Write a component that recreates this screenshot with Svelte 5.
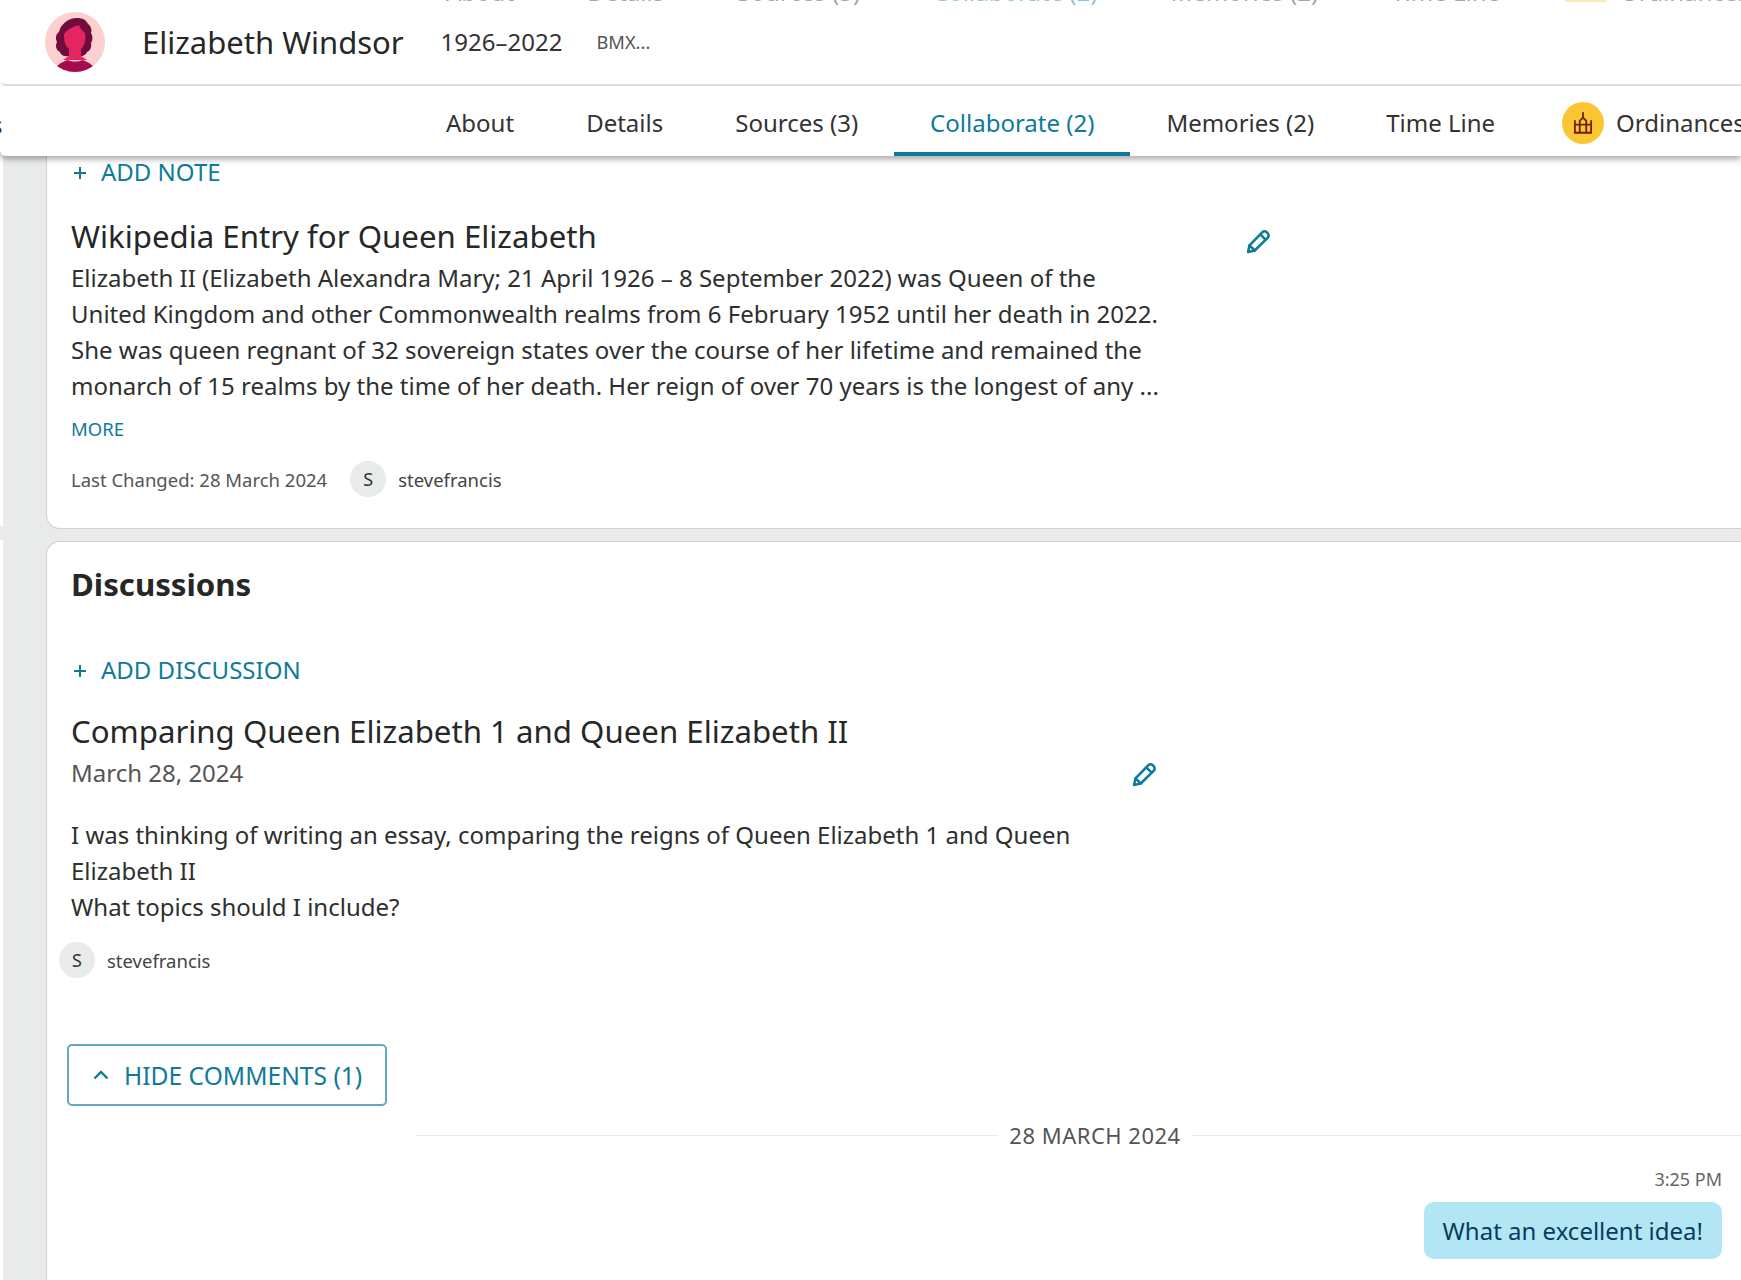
<script lang="ts">
  const tabs = [
    { label: 'About' },
    { label: 'Details' },
    { label: 'Sources (3)' },
    { label: 'Collaborate (2)', active: true },
    { label: 'Memories (2)' },
    { label: 'Time Line' }
  ];
</script>

{#snippet pencil()}
  <svg class="pencil" viewBox="0 0 24 24" fill="none" stroke="currentColor" stroke-width="2.2" stroke-linejoin="round" stroke-linecap="round">
    <path d="M3.500 20.500l1.200-5.600L15.800 3.600c1-1 2.600-1 3.600 0l1 1c1 1 1 2.600 0 3.600L9.200 19.300z" />
    <path d="M4.700 14.900l4.500 4.400M14 5.500l4.500 4.500" />
  </svg>
{/snippet}

{#snippet plus()}
  <svg class="plus" viewBox="0 0 14 14" fill="none" stroke="currentColor" stroke-width="2">
    <path d="M7 1v12M1 7h12" />
  </svg>
{/snippet}

{#snippet userChip()}
  <span class="chip">S</span>
  <span class="user">stevefrancis</span>
{/snippet}

<div class="page">
  <header class="person">
    <!-- bottoms of the row scrolled out above the header -->
    <div class="ghost-row">
      {#each tabs as t}<span class:teal={t.active}>{t.label}</span>{/each}
      <b></b>
      <span class="last-ghost">Ordinances</span>
    </div>
    <svg class="avatar" viewBox="0 0 60 60">
      <circle cx="30" cy="30" r="30" fill="#fdd0d0" />
      <clipPath id="av"><circle cx="30" cy="30" r="30" /></clipPath>
      <g clip-path="url(#av)">
        <path d="M32 6c6 0 9 2 11 6 3 2 4 6 3 9 2 3 2 7 0 10 1 4-1 8-4 9-1 3-5 5-8 4H24c-3 1-8 0-9-4-4-2-5-6-3-10-2-4-1-8 2-10 1-6 8-14 18-14z" fill="#700d3c" />
        <path d="M28 15l6-2c1 4 4 6 6 8 1 7 0 12-4 16v7l6 4H18l6-4v-7c-4-3-5-8-5-14 1-4 6-6 9-8z" fill="#e3265f" />
        <path d="M10 60c0-6 6-10 13-12 3 2 11 2 14 0 7 2 13 6 13 12z" fill="#a80b4d" />
      </g>
    </svg>
    <h1>Elizabeth Windsor</h1>
    <span class="years">1926–2022</span>
    <span class="pid">BMX...</span>
  </header>

  <nav class="tabs">
    <span class="clipped">s</span>
    {#each tabs as t}
      <span class="tab" class:active={t.active}>{t.label}</span>
    {/each}
    <span class="tab ord">
      <span class="temple">
        <svg viewBox="0 0 24 24" fill="none" stroke="#6b2408" stroke-width="1.700">
          <path d="M12 2v5M9 21v-11l3-3 3 3v11M4.500 13.500h15V21h-15zM4.500 13.500V9.500M19.500 13.500V9.500" />
        </svg>
      </span>
      Ordinances
    </span>
  </nav>

  <main class="content">
    <section class="card notes">
      <div class="add">{@render plus()}ADD NOTE</div>

      <div class="entry-head">
        <h2>Wikipedia Entry for Queen Elizabeth</h2>
        {@render pencil()}
      </div>
      <p class="body clamp">
        Elizabeth II (Elizabeth Alexandra Mary; 21 April 1926 – 8 September 2022) was Queen of the
        United Kingdom and other Commonwealth realms from 6 February 1952 until her death in 2022.
        She was queen regnant of 32 sovereign states over the course of her lifetime and remained the
        monarch of 15 realms by the time of her death. Her reign of over 70 years is the longest of any ...
      </p>
      <div class="more">MORE</div>
      <div class="changed">
        <span class="last">Last Changed: 28 March 2024</span>
        {@render userChip()}
      </div>
    </section>

    <section class="card discussions">
      <h3>Discussions</h3>
      <div class="add second">{@render plus()}ADD DISCUSSION</div>

      <div class="topic">
        <h2>Comparing Queen Elizabeth 1 and Queen Elizabeth II</h2>
        <div class="date-row">
          <span class="date">March 28, 2024</span>
          {@render pencil()}
        </div>
        <p class="body">
          I was thinking of writing an essay, comparing the reigns of Queen Elizabeth 1 and Queen
          Elizabeth II<br />What topics should I include?
        </p>
      </div>
      <div class="author">{@render userChip()}</div>

      <button class="toggle">
        <svg viewBox="0 0 16 10" fill="none" stroke="currentColor" stroke-width="2.400"><path d="M1.500 8.500L8 2l6.500 6.500" /></svg>
        HIDE COMMENTS (1)
      </button>

      <div class="chat">
        <div class="day"><i></i><span>28 MARCH 2024</span><i></i></div>
        <div class="time">3:25 PM</div>
        <div class="bubble">What an excellent idea!</div>
      </div>
    </section>
  </main>
</div>

<style>
  :global(body) { margin: 0; background: #fff; }

  .page {
    width: 1741px;
    height: 1280px;
    overflow: hidden;
    position: relative;
    font-family: "Noto Sans", "Open Sans", sans-serif;
    color: #262727;
    background: #fff;
  }

  .person {
    height: 84px;
    display: flex;
    align-items: center;
    padding-left: 45px;
    border-bottom: 2px solid #e4e5e5;
    border-radius: 0 0 0 6px;
    background: #fff;
    position: relative;
  }
  .ghost-row {
    position: absolute;
    top: -23px;
    left: 446px;
    display: flex;
    gap: 73px;
    font-size: 24px;
    line-height: 30px;
    color: #a5a8a8;
    white-space: nowrap;
  }
  .ghost-row .teal { color: #8cc6d8; }
  .ghost-row b { width: 42px; height: 25px; background: #fde8b8; margin-left: -8px; }
  .ghost-row .last-ghost { margin-left: -60px; }
  .avatar { width: 60px; height: 60px; flex: none; }
  h1 { font-size: 31px; font-weight: 400; margin: -1px 0 0 37px; line-height: 44px; }
  .years { font-size: 24px; margin: -2px 0 0 37px; color: #333; }
  .pid { font-size: 18.300px; margin: -2px 0 0 34px; color: #555; }

  .tabs {
    height: 70px;
    display: flex;
    align-items: stretch;
    padding-left: 410px;
    background: #fff;
    position: relative;
    z-index: 2;
    border-radius: 0 0 0 6px;
    box-shadow: 0 3px 6px rgba(0, 0, 0, 0.35);
  }
  .clipped { position: absolute; left: -9px; top: 22px; font-size: 24px; color: #333; }
  .tab {
    display: flex;
    align-items: center;
    padding: 6px 36px 0;
    font-size: 24px;
    color: #333;
    border-bottom: 4px solid transparent;
    white-space: nowrap;
  }
  .tab.active { color: #0f7a99; border-bottom-color: #0f7a99; }
  .ord { padding: 3px 0 0 31px; gap: 12px; border: 0; }
  .temple {
    width: 42px;
    height: 42px;
    border-radius: 50%;
    background: #fbc634;
    display: flex;
    align-items: center;
    justify-content: center;
  }
  .temple svg { width: 26px; height: 26px; }

  .content {
    margin-left: 3px;
    padding-left: 43px;
    background: #e9ebea;
    height: 1124px;
    position: relative;
  }
  /* the gap between the cards runs out to the window edge */
  .content::before {
    content: "";
    position: absolute;
    left: -3px;
    top: 370px;
    width: 3px;
    height: 14px;
    background: #e9ebea;
  }
  .card {
    background: #fff;
    border: 1px solid #cfd1d1;
    border-right: 0;
    box-sizing: border-box;
    padding-left: 24px;
    position: relative;
  }
  .notes { height: 373px; border-top: 0; border-radius: 0 0 0 14px; padding-top: 1px; }
  .discussions { height: 760px; margin-top: 12px; border-bottom: 0; border-radius: 14px 0 0 0; padding-top: 21px; }

  .add {
    display: flex;
    align-items: center;
    font-size: 24px;
    line-height: 30px;
    color: #0f7a99;
  }
  .plus { width: 14px; height: 14px; margin: 2px 14px 0 2px; }
  .second { margin-top: 50px; }

  h2 { font-size: 31.200px; font-weight: 400; line-height: 40px; margin: 0; }
  .entry-head { display: flex; align-items: center; margin-top: 29px; width: 1201px; justify-content: space-between; }
  .pencil { width: 28px; height: 28px; color: #0f7a99; flex: none; }
  .entry-head .pencil { margin-top: 11px; }

  .body { font-size: 24px; line-height: 36px; margin: 0; width: 1100px; color: #2e2f2f; }
  .clamp { margin-top: 4px; }
  .more { font-size: 18.500px; line-height: 24px; color: #0f7a99; margin-top: 13px; }
  .changed { display: flex; align-items: center; margin-top: 20px; }
  .last { font-size: 18.500px; color: #555; margin-right: 23px; }
  .chip {
    width: 36px;
    height: 36px;
    border-radius: 50%;
    background: #e9ebea;
    display: flex;
    align-items: center;
    justify-content: center;
    font-size: 18px;
    color: #333;
  }
  .user { font-size: 18.500px; color: #444; margin-left: 12px; }

  h3 { font-size: 31.200px; font-weight: 700; line-height: 42px; margin: 0; }
  .topic { margin-top: 26px; }
  .date-row { display: flex; align-items: center; justify-content: space-between; width: 1087px; margin-top: 2px; height: 40px; }
  .date-row .pencil { margin-top: 3px; }
  .date { font-size: 24px; line-height: 40px; color: #555; }
  .topic .body { margin-top: 24px; }
  .author { display: flex; align-items: center; margin: 17px 0 0 -12px; }

  .toggle {
    display: flex;
    align-items: center;
    box-sizing: border-box;
    width: 320px;
    height: 62px;
    margin: 66px 0 0 -4px;
    padding: 0 0 0 24px;
    background: #fff;
    border: 2px solid #5fa9c2;
    border-radius: 5px;
    color: #0f7a99;
    font: inherit;
    font-size: 24.600px;
    white-space: nowrap;
  }
  .toggle svg { width: 16px; height: 10px; margin-right: 15px; }

  .chat { width: 1360px; margin: 14px 0 0 344px; }
  .day { display: flex; align-items: center; gap: 11px; font-size: 22px; line-height: 30px; color: #555; letter-spacing: 0.5px; }
  .day i { flex: 1; height: 1px; background: #e9ebea; }
  .time { font-size: 18px; line-height: 24px; color: #666; text-align: right; margin: 17px 53px 0 0; }
  .bubble {
    width: max-content;
    margin: 11px 53px 0 auto;
    padding: 0 19px;
    height: 57px;
    line-height: 57px;
    border-radius: 10px;
    background: #b3e6f5;
    color: #0a3b5c;
    font-size: 24px;
  }
</style>
